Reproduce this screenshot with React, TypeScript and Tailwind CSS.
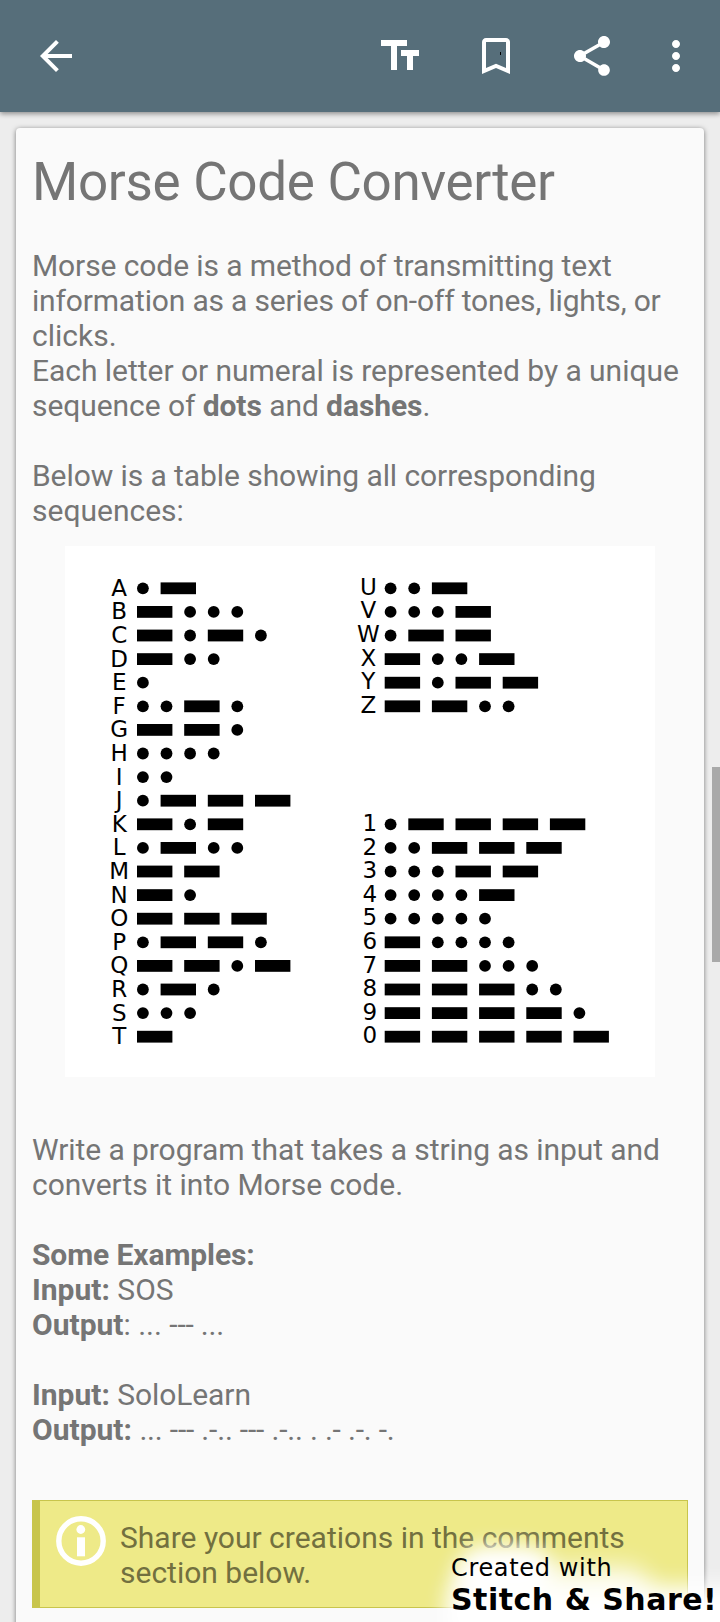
import React from "react";
import { MdArrowBack, MdBookmarkBorder, MdMoreVert, MdShare } from "react-icons/md";

const LETTERS: [string, string][] = [
  ["A", ".-"], ["B", "-..."], ["C", "-.-."], ["D", "-.."], ["E", "."],
  ["F", "..-."], ["G", "--."], ["H", "...."], ["I", ".."], ["J", ".---"],
  ["K", "-.-"], ["L", ".-.."], ["M", "--"], ["N", "-."], ["O", "---"],
  ["P", ".--."], ["Q", "--.-"], ["R", ".-."], ["S", "..."], ["T", "-"],
];

const LAST_LETTERS: [string, string][] = [
  ["U", "..-"], ["V", "...-"], ["W", ".--"], ["X", "-..-"], ["Y", "-.--"], ["Z", "--.."],
];

const DIGITS: [string, string][] = [
  ["1", ".----"], ["2", "..---"], ["3", "...--"], ["4", "....-"], ["5", "....."],
  ["6", "-...."], ["7", "--..."], ["8", "---.."], ["9", "----."], ["0", "-----"],
];

const UNIT = 11.8;
const PITCH = 23.6;

type CodeRowsProps = {
  rows: [string, string][];
  firstRow: number;
  labelX: number;
  codeX: number;
  drop: number;
};

function CodeRows({ rows, firstRow, labelX, codeX, drop }: CodeRowsProps) {
  return (
    <>
      {rows.map(([label, code], i) => {
        const y = 42.3 + (firstRow + i) * PITCH;
        let x = codeX;
        return (
          <g key={label}>
            <text x={labelX} y={y + drop} textAnchor="middle">{label}</text>
            {code.split("").map((mark, j) => {
              const start = x;
              x += mark === "." ? UNIT * 2 : UNIT * 4;
              return mark === "." ? (
                <circle key={j} cx={start + UNIT / 2} cy={y} r={UNIT / 2} />
              ) : (
                <rect key={j} x={start} y={y - UNIT / 2} width={UNIT * 3} height={UNIT} />
              );
            })}
          </g>
        );
      })}
    </>
  );
}

function MorseChart() {
  return (
    <svg
      viewBox="0 0 590 531"
      className="ml-[33px] block h-[531px] w-[590px] bg-white fill-black font-['DejaVu_Sans',sans-serif] text-[23px]"
    >
      <CodeRows rows={LETTERS} firstRow={0} labelX={54.2} codeX={72} drop={7.4} />
      <CodeRows rows={LAST_LETTERS} firstRow={0} labelX={303.4} codeX={319.7} drop={6.4} />
      <CodeRows rows={DIGITS} firstRow={10} labelX={304.8} codeX={319.7} drop={6.6} />
    </svg>
  );
}

function Header() {
  return (
    <header className="relative z-10 flex h-28 items-center bg-[#566e7a] pl-8 pr-5 text-white shadow-[0_2px_5px_rgba(0,0,0,0.4)]">
      <MdArrowBack className="size-12" />
      <svg viewBox="0 0 24 24" className="ml-auto size-12 fill-current">
        <path d="M2.5 4v3h5v12h3V7h5V4h-13zm19 5h-9v3h3v7h3v-7h3V9z" />
      </svg>
      <div className="relative ml-12 size-12">
        <MdBookmarkBorder className="size-12" />
        <span className="absolute left-7 top-5 h-[3px] w-px bg-black" />
      </div>
      <MdShare className="ml-12 size-12" />
      <MdMoreVert className="ml-9 size-12" />
    </header>
  );
}

function Note() {
  return (
    <div className="flex h-[108px] border border-l-8 border-[#c8c54c] bg-[#eeea88] pl-4 pt-[15px] text-[#72703f]">
      <svg viewBox="0 0 50 50" className="size-[50px] shrink-0 fill-white">
        <circle cx="25" cy="25" r="22.2" fill="none" stroke="white" strokeWidth="5.4" />
        <circle cx="24.8" cy="13.5" r="4.4" />
        <rect x="21" y="21.3" width="8" height="19" />
      </svg>
      <p className="ml-[14px] mt-[4px]">
        Share your creations in the comments
        <br />
        section below.
      </p>
    </div>
  );
}

function Watermark() {
  return (
    <div className="absolute left-[451px] top-[1552px] whitespace-nowrap font-['DejaVu_Sans',sans-serif] text-black">
      <div className="absolute left-[6px] -top-[6px] h-[56px] w-[96px] rounded-full bg-white blur-[10px]" />
      <div className="absolute left-0 top-[14px] h-[50px] w-[200px] rounded-full bg-white/80 blur-[12px]" />
      <div className="absolute -left-[4px] top-[34px] h-[60px] w-[310px] rounded-[20px] bg-white blur-[11px]" />
      <p className="relative text-[24px] leading-8 tracking-[0.65px]">Created with</p>
      <p className="relative text-[30px] font-bold leading-8 tracking-[0.5px]">Stitch &amp; Share!</p>
    </div>
  );
}

export default function App() {
  return (
    <div className="relative h-[1622px] w-[720px] overflow-hidden bg-[#ededed] font-[Roboto,sans-serif] text-[30px] leading-[35px] text-[#757575]">
      <Header />
      <main className="mx-4 mt-4 h-[1600px] rounded-[4px] bg-[#fafafa] px-4 pt-[23px] shadow-[0_1px_5px_rgba(0,0,0,0.5)]">
        <h1 className="text-[53px] leading-[62px] tracking-[-0.32px]">Morse Code Converter</h1>
        <p className="mt-[35px] whitespace-nowrap">
          <span className="tracking-[-0.1px]">Morse code is a method of transmitting text</span>
          <br />
          <span className="tracking-[-0.17px]">information as a series of on-off tones, lights, or</span>
          <br />
          clicks.
          <br />
          <span className="tracking-[-0.04px]">Each letter or numeral is represented by a unique</span>
          <br />
          <span className="tracking-[-0.07px]">
            sequence of <b>dots</b> and <b>dashes</b>.
          </span>
        </p>
        <p className="mb-[18px] mt-[35px]">
          <span className="tracking-[-0.08px]">Below is a table showing all corresponding</span>
          <br />
          sequences:
        </p>
        <MorseChart />
        <p className="mt-[55px] whitespace-nowrap">
          <span className="tracking-[-0.08px]">Write a program that takes a string as input and</span>
          <br />
          <span className="tracking-[-0.02px]">converts it into Morse code.</span>
        </p>
        <p className="mt-[35px]">
          <b className="tracking-[-0.1px]">Some Examples:</b>
          <br />
          <b>Input:</b> SOS
          <br />
          <b>Output</b>: ... <span className="tracking-[-0.2px]">--- ...</span>
        </p>
        <p className="mb-[53px] mt-[35px]">
          <b>Input:</b> <span className="tracking-[-0.1px]">SoloLearn</span>
          <br />
          <b>Output:</b> <span className="tracking-[-0.19px]">... --- .-.. --- .-.. . .- .-. -.</span>
        </p>
        <Note />
      </main>
      <div className="absolute right-0 top-[767px] h-[195px] w-2 bg-[#a9a9a9]" />
      <Watermark />
    </div>
  );
}
